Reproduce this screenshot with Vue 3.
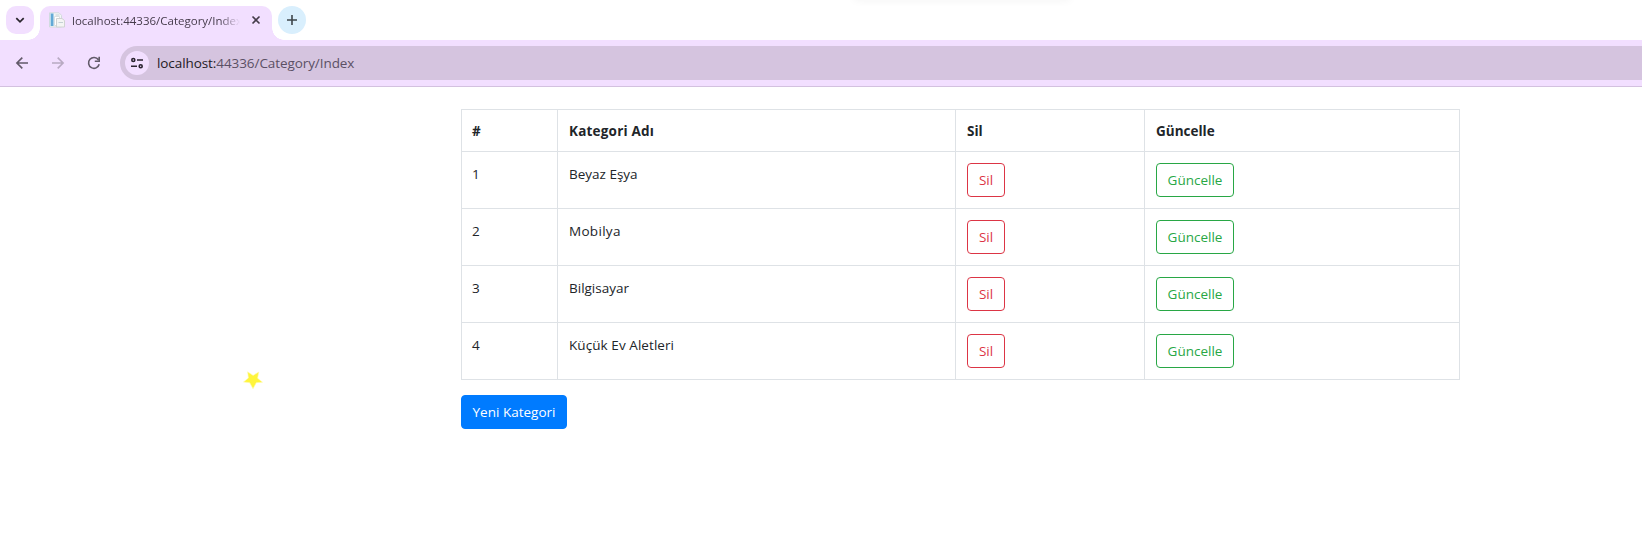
<script setup>
const categories = [
  { id: 1, name: 'Beyaz Eşya', cls: 'n1' },
  { id: 2, name: 'Mobilya', cls: 'n2' },
  { id: 3, name: 'Bilgisayar', cls: 'n3' },
  { id: 4, name: 'Küçük Ev Aletleri', cls: 'n4' },
]
</script>

<template>
  <div class="window">
    <div class="shade"></div>
    <header>
      <div class="tabs">
        <button class="search" aria-label="Search tabs">
          <svg width="28" height="28" viewBox="0 0 28 28"><path d="M10.3 12.2 14 15.9l3.7-3.7" fill="none" stroke="#29252d" stroke-width="1.7" /></svg>
        </button>
        <div class="tab">
          <svg class="favicon" width="16" height="16" viewBox="0 0 16 16">
            <path d="M.5.8H10l2.5 2.5V15H.5z" fill="#f3f7f8" stroke="#d3dadd" />
            <path d="M1.5 1.5h3V14h-3z" fill="#62a9d6" />
            <path d="M.8 1.5h.9V14H.8z" fill="#c2e0ee" />
            <path d="M5.5 4.5h5v9h-5z" fill="#fff" stroke="#dbe0e2" />
            <path d="M7.5 6.5h5.5l2.5 2v6.5h-8z" fill="#f4f5f4" stroke="#d0d3d3" />
            <path d="M6.5 3h4M9.5 10.5H14" stroke="#c5d0d4" />
          </svg>
          <span class="tabtitle">localhost:44336/Category/Index</span>
          <svg class="close" width="10" height="10" viewBox="0 0 10 10"><path d="m1.5 1.5 7 7M8.5 1.5l-7 7" stroke="#453d4a" stroke-width="1.6" /></svg>
        </div>
        <button class="add" aria-label="New tab">
          <svg width="28" height="28" viewBox="0 0 28 28"><path d="M14 9v10M9 14h10" stroke="#3d454a" stroke-width="1.6" /></svg>
        </button>
      </div>
      <div class="toolbar">
        <svg class="back" width="14" height="14" viewBox="0 0 14 14"><path d="M13 7H2M7.3 1.6 1.9 7l5.4 5.4" fill="none" stroke="#625a69" stroke-width="1.6" /></svg>
        <svg class="forward" width="14" height="14" viewBox="0 0 14 14"><path d="M1 7h11M6.7 1.6 12.1 7l-5.4 5.4" fill="none" stroke="#b8aac2" stroke-width="1.6" /></svg>
        <svg class="reload" width="14" height="14" viewBox="0 0 14 14"><path d="M11.4 3.8A5.4 5.4 0 1 0 12.2 8.3M12.2.8v4.5H7.8" fill="none" stroke="#625a69" stroke-width="1.6" /></svg>
        <div class="omnibox">
          <span class="site">
            <svg width="12" height="12" viewBox="0 0 12 12" fill="none" stroke="#2b2430" stroke-width="1.6"><circle cx="2.3" cy="3" r="1.5" /><path d="M6 3h6M0 9.2h6" /><circle cx="9.7" cy="9.2" r="1.5" /></svg>
          </span>
          <span class="url"><b>localhost:</b>44336/Category/Index</span>
        </div>
      </div>
    </header>
    <main>
      <table>
        <colgroup><col class="c1"><col class="c2"><col class="c3"><col class="c4"></colgroup>
        <thead>
          <tr><th>#</th><th><span class="hk">Kategori Adı</span></th><th>Sil</th><th>Güncelle</th></tr>
        </thead>
        <tbody>
          <tr v-for="c in categories" :key="c.id">
            <td>{{ c.id }}</td>
            <td><span :class="c.cls">{{ c.name }}</span></td>
            <td><button class="btn del">Sil</button></td>
            <td><button class="btn upd">Güncelle</button></td>
          </tr>
        </tbody>
      </table>
      <button class="btn new">Yeni Kategori</button>
    </main>
    <svg class="star" width="20" height="19" viewBox="0 0 20 19"><path d="m4.6.8 5.5 3.6L15.8 1l-1.2 6.2 4.9 4-6.2.5L10 17.8l-3.3-6.1-6.2-.7 4.9-4z" fill="#fff53c" stroke="#fffbb0" stroke-width=".6" /></svg>
  </div>
</template>

<style>
body { background: #fff; }
</style>

<style scoped>
.window {
  position: relative;
  height: 537px;
  overflow: hidden;
  font-family: "Open Sans", "Noto Sans", sans-serif;
  font-size: 13.5px;
  color: #212529;
}
* { box-sizing: border-box; }
button { border: 0; padding: 0; font: inherit; }
svg { display: block; flex: none; }
.shade {
  position: absolute;
  top: -6px;
  left: 854px;
  width: 216px;
  height: 6px;
  box-shadow: 0 0 8px rgba(0, 0, 0, .06);
}
.tabs { display: flex; height: 40px; padding: 6px 0 0 6px; }
.search { width: 28px; height: 28px; border-radius: 10px; background: #f2dfff; }
.tab {
  position: relative;
  display: flex;
  width: 232px;
  height: 34px;
  margin-left: 6px;
  padding: 0 11px 6px 9px;
  align-items: center;
  border-radius: 10px 10px 0 0;
  background: #f2dfff;
}
.tab::before, .tab::after {
  content: "";
  position: absolute;
  bottom: 0;
  width: 12px;
  height: 12px;
}
.tab::before { left: -12px; background: radial-gradient(circle at 0 0, transparent 11.5px, #f2dfff 12px); }
.tab::after { right: -12px; background: radial-gradient(circle at 100% 0, transparent 11.5px, #f2dfff 12px); }
.tabtitle {
  width: 168px;
  margin-left: 7px;
  overflow: hidden;
  white-space: nowrap;
  font-size: 11.5px;
  line-height: 18px;
  color: #453b4b;
  padding-top: 1px;
  mask-image: linear-gradient(90deg, #000 148px, transparent 168px);
}
.close { margin-left: auto; }
.add { width: 28px; height: 28px; margin-left: 6px; border-radius: 50%; background: #d9effd; }
.toolbar {
  display: flex;
  height: 47px;
  padding-left: 15px;
  align-items: center;
  background: #f2dfff;
  border-bottom: 1px solid #d3c1df;
}
.forward { margin-left: 22px; }
.reload { margin-left: 22px; }
.omnibox {
  display: flex;
  flex: 1;
  height: 34px;
  margin-left: 19px;
  padding-left: 5px;
  align-items: center;
  border-radius: 17px 0 0 17px;
  background: #d5c4df;
}
.site {
  display: flex;
  width: 24px;
  height: 24px;
  align-items: center;
  justify-content: center;
  border-radius: 50%;
  background: #f2dfff;
}
.url { margin-left: 8px; font-size: 13.5px; letter-spacing: -.08px; line-height: 20px; color: #5b5064; white-space: nowrap; }
.url b { font-weight: 400; color: #1f1a24; }
main { width: 999px; margin: 22px 0 0 461px; }
table { width: 999px; table-layout: fixed; border-collapse: collapse; }
.c1 { width: 96px; }
.c2 { width: 398px; }
.c3 { width: 189px; }
.c4 { width: 315px; }
th, td {
  padding: 11px 11px 0;
  border: 1px solid #dee2e6;
  text-align: left;
  vertical-align: top;
  line-height: 22px;
}
th { height: 42px; padding-top: 10px; font-weight: 700; }
td { height: 57px; }
th:first-child, td:first-child { padding-left: 10px; }
.hk { letter-spacing: .2px; }
.n2 { letter-spacing: .3px; }
.n4 { letter-spacing: .07px; }
.btn {
  display: block;
  height: 34px;
  border: 1px solid;
  border-radius: 4px;
  background: #fff;
  line-height: 32px;
  white-space: nowrap;
}
.del { width: 38px; color: #dc3545; }
.upd { width: 78px; color: #28a745; }
.new { width: 106px; margin-top: 15px; border-color: #007bff; background: #007bff; color: #fff; }
.star { position: absolute; left: 243px; top: 371px; }
</style>
